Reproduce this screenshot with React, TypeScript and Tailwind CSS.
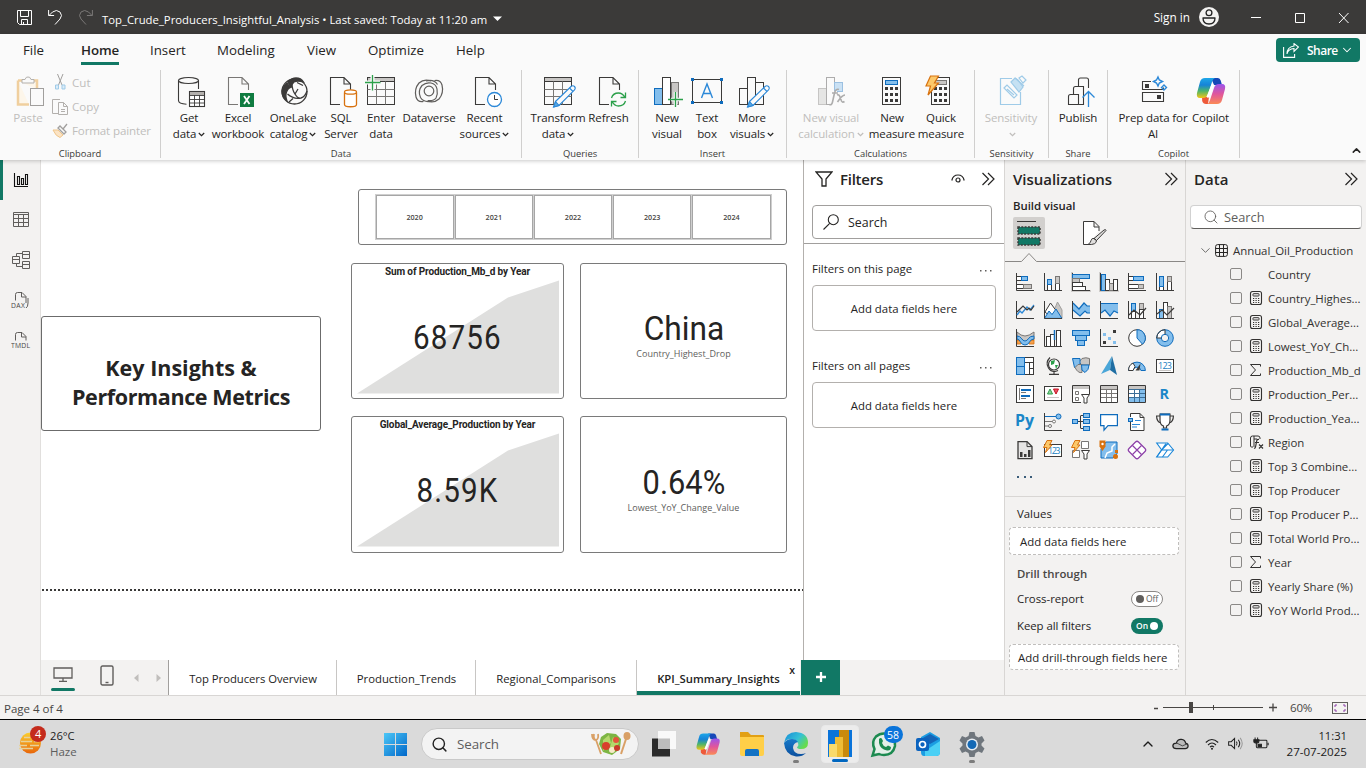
import React from "react";
import { ChevronDown, ChevronUp, Search as SearchIcon } from "lucide-react";

type Kids = { children?: React.ReactNode };

const DK = "#3b3a39";
const BL = "#0f6cbd";
const LB = "#83beec";
const GR = "#c8c6c4";
const MG = "#797775";
const OR = "#d8720f";

/* ---------- ribbon icons, 32 x 32 ---------- */

function R({ children, dim }: Kids & { dim?: boolean }) {
  return (
    <svg viewBox="0 0 32 32" width="32" height="32" fill="none" className={dim ? "overflow-visible opacity-40" : "overflow-visible"}>
      {children}
    </svg>
  );
}

const Page = ({ x = 6, c = DK }: { x?: number; c?: string }) => (
  <g transform={`translate(${x} 0)`} stroke={c} strokeWidth="1.1">
    <path d="M10 29.5H.5v-27H14l6.500 6.500v6M14 2.500v6.500h6.500" />
  </g>
);

const Pen = () => (
  <g strokeWidth="1.1" stroke="#2b88d8">
    <path d="M13.500 26.500 29 11.500q2-1.500 3.500 0t0 3.500L17 30.500l-5 1.500z" fill="#fafafa" />
    <path d="m13.500 26.500 3.500 4-5.500 1.500z" fill="#5aa7e2" />
    <path d="m27.500 13 3.500 3.500" />
  </g>
);

const Calc = ({ c = "#0f6cbd", f = LB }: { c?: string; f?: string }) => (
  <g>
    <rect x="6.500" y="2.500" width="18" height="27" stroke={DK} fill="#fafafa" />
    <rect x="9.500" y="5.500" width="12" height="4" stroke={c} fill={f} />
    {[12, 18, 24].map((y) =>
      [9, 14, 19].map((x) => <rect key={`${x}-${y}`} x={x} y={y} width="3" height="3" fill={DK} />)
    )}
  </g>
);

const CopilotMark = () => (
  <g>
    <defs>
      <linearGradient id="cpA" x1="0" y1="0" x2="0" y2="1">
        <stop offset="0" stopColor="#1ea7e8" />
        <stop offset=".35" stopColor="#1683d8" />
        <stop offset=".65" stopColor="#4db56a" />
        <stop offset="1" stopColor="#f3c515" />
      </linearGradient>
      <linearGradient id="cpB" x1="0" y1="0" x2="0" y2="1">
        <stop offset="0" stopColor="#9a55ec" />
        <stop offset=".5" stopColor="#e0569c" />
        <stop offset="1" stopColor="#fb8a55" />
      </linearGradient>
    </defs>
    <path d="M16 3h7q2 0 2.700 2.500L27 10h-8z" fill="#1648b8" />
    <path d="M7 22h7l-1 7H11q-3 0-3.800-3z" fill="#ee5a3a" />
    <path d="M10 3h10q-2 .5-3 4l-4 12q-1 4-5 4H5q-4 0-3-5L5 7q1-4 5-4z" fill="url(#cpA)" />
    <path d="M22 29H12q2-.5 3-4l4-12q1-4 5-4h3q4 0 3 5l-3 11q-1 4-5 4z" fill="url(#cpB)" />
    <path d="m17.500 10.500-4.500 11" stroke="#fff" strokeWidth="2.500" strokeLinecap="round" />
  </g>
);

const Bolt = () => <path d="M5.500 1h8l-4 7h4L3 20l2.500-9H1z" fill="#fcc86a" stroke={OR} strokeWidth="1.2" />;

const icoGet = (
  <R>
    <g stroke={DK} strokeWidth="1.1">
      <ellipse cx="15.500" cy="5.500" rx="10" ry="3" />
      <path d="M5.500 5.500v20c0 2 3.500 3.500 8 3.700M25.500 5.500V14" />
      <rect x="16.500" y="16.500" width="15" height="15" fill="#fff" />
      <path d="M16.500 20.500h15M16.500 24.500h15M16.500 28h15M21.500 20v11.500M26.500 20v11.500" strokeWidth=".9" />
      <path d="M17 18.500h14" stroke="#b3b0ad" strokeWidth="3" />
    </g>
  </R>
);
const icoExcel = (
  <R>
    <Page c={MG} />
    <rect x="18" y="18" width="14" height="14" fill="#107c41" />
    <path d="m22 21 5.500 8M27.500 21 22 29" stroke="#fff" strokeWidth="1.800" />
  </R>
);
const icoLake = (
  <R>
    <g stroke={DK} strokeWidth="1.300">
      <circle cx="17.500" cy="16.500" r="12.500" />
      <path d="M11 7q4-4 8-4 5 0 7.500 4-6-2-9.500 0-3 2.500-3 6z" fill={DK} />
      <path d="M10 8q-4 3-5 8 0 6 5 10-2-5-.5-9 1-3 3.500-4.500z" fill={DK} />
      <path d="M15 8q0 7 3 11 3 5 6 4 4-1 6-7M10.500 19q6 5.500 13.500 4M12 27l4-3.500M20 7.500l6 3M18 19l3-5" />
    </g>
  </R>
);
const icoSql = (
  <R>
    <Page x={5} />
    <g stroke={OR} strokeWidth="1.300" fill="#fff">
      <path d="M19.500 17.500v12c0 3 12 3 12 0v-12" />
      <ellipse cx="25.500" cy="17" rx="6" ry="2.200" />
    </g>
  </R>
);
const tableGrid = (
  <g stroke={DK}>
    <path d="M3 4.500h27" stroke={GR} strokeWidth="4" />
    <rect x="2.500" y="2.500" width="27" height="27" />
    <path d="M2.500 6.500h27" />
    <path d="M2.500 14.500h27M2.500 21.500h27M11.500 6.500v23M20.500 6.500v23" stroke={MG} />
  </g>
);
const icoEnter = (
  <R>
    {tableGrid}
    <path d="M7.500 0v15M0 7.500h15" stroke="#fafafa" strokeWidth="4" />
    <path d="M7.500 0v15.500M0 7.500h15.500" stroke="#2ba04a" strokeWidth="1.300" />
  </R>
);
const icoVerse = (
  <R>
    <g stroke="#605e5c" strokeWidth="1.200">
      <circle cx="16" cy="16" r="4.800" />
      <path d="M19 26q-8 2-11.500-3.500Q4.500 16 9 10.500 13 7 18 8t6 6-1 9q-2 3-8 2.500" />
      <path d="M13 6q8-2 11.500 3.500" />
      <path d="M18 6Q11 3.500 6 8q-5 6-3 14 1.500 5.500 7.500 4.500M14 26q7 2.500 12-2 5-6 3-14-1.500-5.500-7.500-4.500" />
    </g>
  </R>
);
const icoRecent = (
  <R>
    <Page />
    <circle cx="25.500" cy="24.500" r="7" stroke="#2b88d8" strokeWidth="1.300" fill="#fff" />
    <path d="M25.500 20v4.500H29" stroke={DK} />
  </R>
);
const icoTransform = (
  <R>
    {tableGrid}
    <Pen />
  </R>
);
const icoRefresh = (
  <R>
    <Page />
    <circle cx="25.500" cy="24.500" r="8" fill="#fafafa" />
    <path d="M18.500 23q1.500-5 7-5 4 0 6.500 4.500m.5-5v5h-5M32.500 26q-1.500 5-7 5-4 0-6.500-4.500m-.5 5v-5h5" stroke="#2ba04a" strokeWidth="1.300" />
  </R>
);
const icoNewVisual = (
  <R>
    <rect x="3.500" y="13.500" width="8" height="16" fill={LB} stroke={BL} />
    <rect x="20.500" y="7.500" width="7" height="22" fill={GR} stroke={MG} />
    <rect x="11.500" y="2.500" width="8" height="27" fill="#fff" stroke={DK} />
    <path d="M24.500 17v15M20 24.500h12" stroke="#fafafa" strokeWidth="3.500" />
    <path d="M24.500 17v15M17 24.500h15" stroke="#2ba04a" strokeWidth="1.300" />
  </R>
);
const icoTextBox = (
  <R>
    <rect x="1.500" y="4.500" width="29" height="23" stroke={DK} />
    {[[0, 3], [29, 3], [0, 26], [29, 26]].map(([x, y]) => (
      <rect key={`${x}${y}`} x={x} y={y} width="3" height="3" fill={BL} />
    ))}
    <path d="m10.500 23 5.500-14 5.500 14M12.500 18.500h7" stroke="#2b88d8" strokeWidth="1.400" />
  </R>
);
const icoMore = (
  <R>
    <g stroke={DK}>
      <rect x="3.500" y="13.500" width="8" height="16" />
      <rect x="11.500" y="2.500" width="8" height="27" />
      <rect x="19.500" y="7.500" width="8" height="22" />
    </g>
    <Pen />
  </R>
);
const icoNvc = (
  <R dim>
    <rect x="3.500" y="13.500" width="8" height="16" fill={GR} stroke={MG} />
    <rect x="11.500" y="2.500" width="8" height="27" stroke={DK} />
    <rect x="19.500" y="7.500" width="8" height="9" fill={LB} stroke={BL} />
    <path d="M15 16h7v14h-7z" fill="#fafafa" />
    <path d="M24 14.500q-3.500-1-4.500 3.500l-2 9q-.8 3.500-3 2.500M17 18h6M22 20q2-1 3 2l1.500 4q1 2 3 .5M30 20q-3 0-7.500 7" stroke={DK} strokeWidth="1.600" />
  </R>
);
const icoSens = (
  <R>
    <g stroke="#9fcbe8" strokeWidth="1.200">
      <path d="M17 3.500H5.500v26h20V17" />
      <path d="m9 13 3-3 10 10-3 3zM12 14l7 6" />
      <path d="m16 7 4-4 3 2 5 7-4 5z" fill="#c5e1f3" />
      <path d="m24 3 3-2 4 4-3 3zM20 3l9 8" />
    </g>
  </R>
);
const icoPublish = (
  <R>
    <path d="M6.500 29.500v-8q0-2 2-2h8v10zM11.500 19.500v-6q0-2 2-2h8v18h-5M16.500 11v-6q0-2 2-2h6q2 0 2 2v8" stroke={DK} strokeWidth="1.100" />
    <path d="M26.500 32V16.500m-6 6 6-6 6 6" stroke="#2b88d8" strokeWidth="1.300" />
  </R>
);
const icoPrep = (
  <R>
    <path d="M14 6.500H5.500v8h21v-2M5.500 17.500h21v9h-21z" stroke={DK} strokeWidth="1.100" />
    <path d="M8 9h4v4H8zM20 20h4v4h-4z" fill={DK} />
    <path d="m21 2 1.300 3L25.500 6.500 22.300 8 21 11l-1.500-3-3-1.500 3-1.500zM27 10l2.500 2.500L27 15l-2.500-2.500z" stroke="#2b88d8" strokeWidth="1.400" />
  </R>
);

const Chev = () => (
  <svg width="7" height="5" viewBox="0 0 7 5" className="ml-0.5 inline-block align-middle" fill="none">
    <path d="m.8 1 2.700 2.700L6.200 1" stroke="currentColor" strokeWidth="1.200" />
  </svg>
);

function RBtn({ w, icon, a, b, chev, off }: { w: string; icon: React.ReactNode; a: string; b?: string; chev?: boolean; off?: boolean }) {
  return (
    <button className={`${w} flex shrink-0 flex-col items-center whitespace-nowrap text-[11.500px] leading-4 tracking-[-0.12px] ${off ? "text-[#c0bebc]" : "text-[#252423]"}`}>
      <span className="h-[35px]">{icon}</span>
      <span>{a}</span>
      {(b || chev) && (
        <span>
          {b}
          {chev && <Chev />}
        </span>
      )}
    </button>
  );
}

function Group({ w, pl, name, children }: Kids & { w: string; pl: string; name: string }) {
  return (
    <section className={`${w} flex h-[88px] shrink-0 flex-col border-r border-[#d0cfce]`}>
      <div className={`${pl} flex h-[78px] shrink-0 items-start pt-[5px]`}>{children}</div>
      <div className="text-center text-[9.400px] leading-[11px] text-[#3b3a39]">{name}</div>
    </section>
  );
}

function TitleBar() {
  return (
    <header className="flex h-[34px] items-center bg-[#3b3a39] text-[11.300px] text-white">
      <svg width="17" height="17" viewBox="0 0 17 17" className="ml-4" fill="none" stroke="#fff">
        <path d="M1.500 1.500h14v14h-12l-2-2zM4.500 1.500v6h8v-6M5.500 15.500v-5h6v5M7.500 15v-2" />
      </svg>
      <svg width="15" height="16" viewBox="0 0 15 16" className="ml-[15px]" fill="none" stroke="#fff">
        <path d="M.6 1v5.500h5.500M1 6.500 4.500 3q4-3 7.500 0 3 3.500 0 7l-5 5.500" />
      </svg>
      <svg width="15" height="16" viewBox="0 0 15 16" className="ml-[15px]" fill="none" stroke="#7a7877">
        <path d="M14.400 1v5.500H8.900M14 6.500 10.500 3Q6.500 0 3 3 0 6.500 3 10l5 5.500" />
      </svg>
      <span className="ml-[9px] mt-1.5 w-[387px] whitespace-nowrap tracking-[0.01px]">
        Top_Crude_Producers_Insightful_Analysis • Last saved: Today at 11:20 am
      </span>
      <svg width="9" height="6" viewBox="0 0 9 6" className="ml-[4px] mt-1" fill="#fff"><path d="M0 .5h9L4.500 5z" /></svg>
      <span className="ml-auto mt-px text-[11.800px]">Sign in</span>
      <svg width="20" height="20" viewBox="0 0 20 20" className="ml-[9px]" fill="none" stroke="#222" strokeWidth="1.300">
        <circle cx="10" cy="10" r="10" fill="#f3f2f1" stroke="none" />
        <circle cx="10" cy="5.800" r="2.900" />
        <path d="M4 11h12q0 6-6 6t-6-6z" strokeLinejoin="round" />
      </svg>
      <svg width="98" height="14" viewBox="0 0 98 14" className="ml-8 mr-[17px] mt-px" fill="none" stroke="#fff">
        <path d="M0 6.500h10M44.500 2.500h9v9h-9zM88 2l9.500 10M97.500 2 88 12" />
      </svg>
    </header>
  );
}

function Ribbon() {
  return (
    <div className="relative z-10 h-[126px] bg-[#fafafa] shadow-[0_1px_4px_rgba(0,0,0,0.22)]">
      <nav className="flex h-[36px] items-start text-[13.300px] text-[#252423]">
        <span className="w-[81px] pl-[23px] pt-[7px]">File</span>
        <span className="mr-[31px] flex w-[38px] flex-col pt-[7px] font-semibold tracking-[-0.1px]">
          Home
          <i className="mt-px h-[3px] bg-[#117865]" />
        </span>
        <span className="w-[67px] pt-[7px]">Insert</span>
        <span className="w-[90px] pt-[7px]">Modeling</span>
        <span className="w-[61px] pt-[7px]">View</span>
        <span className="w-[88px] pt-[7px]">Optimize</span>
        <span className="pt-[7px]">Help</span>
        <button className="ml-auto mr-1.5 mt-1 flex h-6 w-[84px] items-center rounded bg-[#117865] pl-[7px] text-white">
          <svg width="16" height="15" viewBox="0 0 16 15" fill="none" stroke="#fff" strokeWidth="1.100">
            <path d="M.6 4v10.400h11V11M4 11q1-5 7-5.500v3l4.500-4.500L11 .6V3Q4 4 4 11z" />
          </svg>
          <span className="ml-2 mt-px text-[12px] font-semibold tracking-[-0.5px]">Share</span>
          <ChevronDown size={14} className="ml-[2px]" strokeWidth={1.800} />
        </button>
      </nav>
      <div className="flex">
        <Group w="w-[161px]" pl="pl-[7px]" name="Clipboard">
          <div className="flex w-[42px] flex-col items-center text-[11.600px] leading-4 text-[#c0bebc]">
            <span className="h-[35px]">
              <svg width="32" height="32" viewBox="0 0 32 32" fill="none" className="overflow-visible">
                <path d="M6 5.500h19v9M6 5.500v24h11" stroke="#f0cf9e" strokeWidth="2.500" fill="#fdf6ea" />
                <path d="M10 8V4.500h3q1-3 3-2.500 2-.5 3 2.500h3V8z" fill="#fafafa" stroke="#b3b0ad" />
                <rect x="18.500" y="13.500" width="13" height="17" fill="#fafafa" stroke="#a19f9d" />
              </svg>
            </span>
            Paste
          </div>
          <ul className="-mt-[4px] ml-[3px] text-[11.600px] leading-[24px] text-[#c0bebc]">
            <li className="flex h-6 items-center gap-1">
              <svg width="16" height="18" viewBox="0 0 16 18" fill="none">
                <path d="m5.500 0 4.500 11M11 0 6.500 11" stroke="#a19f9d" />
                <path d="M3.500 11h3v4h-3zM10 11h3v4h-3z" fill="#dcecf8" stroke="#9fcbe8" />
              </svg>
              Cut
            </li>
            <li className="flex h-6 items-center gap-1">
              <svg width="16" height="18" viewBox="0 0 16 18" fill="none" stroke="#b3b0ad">
                <path d="M6 15.500H.5v-14H8M6.500 4.500h5l4 4v8h-9zM11.500 4.500v4h4M9 11.500h4M9 13.500h4" />
              </svg>
              Copy
            </li>
            <li className="flex h-6 items-center gap-1 tracking-[-0.15px]">
              <svg width="16" height="18" viewBox="0 0 16 18" fill="none">
                <path d="M1 8h5l5 5-3 2.500q-4-1-7-7.500z" fill="#fbe3c4" stroke="#efc58a" />
                <path d="m6 6 6 6 2-2-6-6zM11 7l4-5" stroke="#a19f9d" strokeWidth="1.300" />
              </svg>
              Format painter
            </li>
          </ul>
        </Group>
        <Group w="w-[361px]" pl="pl-[6px]" name="Data">
          <RBtn w="w-[44px]" icon={icoGet} a="Get" b="data" chev />
          <RBtn w="w-[54px]" icon={icoExcel} a="Excel" b="workbook" />
          <RBtn w="w-[56px]" icon={icoLake} a="OneLake" b="catalog" chev />
          <RBtn w="w-[40px]" icon={icoSql} a="SQL" b="Server" />
          <RBtn w="w-[40px]" icon={icoEnter} a="Enter" b="data" />
          <RBtn w="w-[56px]" icon={icoVerse} a="Dataverse" />
          <RBtn w="w-[55px]" icon={icoRecent} a="Recent" b="sources" chev />
        </Group>
        <Group w="w-[117px]" pl="pl-[10px]" name="Queries">
          <RBtn w="w-[52px]" icon={icoTransform} a="Transform" b="data" chev />
          <RBtn w="w-[49px]" icon={icoRefresh} a="Refresh" />
        </Group>
        <Group w="w-[148px]" pl="pl-[8px]" name="Insert">
          <RBtn w="w-[40px]" icon={icoNewVisual} a="New" b="visual" />
          <RBtn w="w-[40px]" icon={icoTextBox} a="Text" b="box" />
          <RBtn w="w-[50px]" icon={icoMore} a="More" b="visuals" chev />
        </Group>
        <Group w="w-[188px]" pl="pl-[7px]" name="Calculations">
          <RBtn w="w-[74px]" icon={icoNvc} a="New visual" b="calculation" chev off />
          <RBtn w="w-[48px]" icon={<R><Calc /></R>} a="New" b="measure" />
          <RBtn w="w-[50px]" icon={<R><Calc c={MG} f={GR} /><Bolt /></R>} a="Quick" b="measure" />
        </Group>
        <Group w="w-[74px]" pl="pl-[6px]" name="Sensitivity">
          <RBtn w="w-[60px]" icon={icoSens} a="Sensitivity" chev off />
        </Group>
        <Group w="w-[59px]" pl="pl-[7px]" name="Share">
          <RBtn w="w-[44px]" icon={icoPublish} a="Publish" />
        </Group>
        <Group w="w-[132px]" pl="pl-[9px]" name="Copilot">
          <RBtn w="w-[72px]" icon={icoPrep} a="Prep data for" b="AI" />
          <RBtn w="w-[43px]" icon={<R><CopilotMark /></R>} a="Copilot" />
        </Group>
        <ChevronUp size={13} className="ml-auto mr-[3px] mt-[74px]" strokeWidth={2.800} color="#252423" />
      </div>
    </div>
  );
}

function Rail() {
  return (
    <aside className="flex w-[41px] shrink-0 flex-col border-r border-[#e1dfdd] bg-[#f3f2f1]">
      <div className="flex h-10 items-center border-l-[3px] border-[#117865] pl-[10px]">
        <svg width="16" height="16" viewBox="0 0 16 16" fill="none" stroke="#111" strokeWidth="1.100">
          <path d="M1.500 1v13.500H15M4.500 12.500v-8h2v8zM8.500 12.500v-6h2v6zM12.500 12.500v-10h2v10z" />
        </svg>
      </div>
      <div className="flex h-10 items-center pl-[13px]">
        <svg width="16" height="16" viewBox="0 0 16 16" fill="none" stroke="#605e5c">
          <path d="M.5.5h15v14H.5zM.5 2.500h15M.5 6.500h15M.5 10.500h15M5.500 2.500v12M10.500 2.500v12" />
        </svg>
      </div>
      <div className="flex h-10 items-center pl-[12px]">
        <svg width="18" height="18" viewBox="0 0 18 18" fill="none" stroke="#605e5c">
          <path d="M.5 5.500h7v7h-7zM.5 8.500h7M10.500.5h7v7h-7zM10.500 3.500h7M10.500 10.500h7v7h-7zM10.500 13.500h7M4.500 5.500v-3h6M4.500 12.500v3h6" />
        </svg>
      </div>
      <div className="flex h-10 items-center pl-[11px]">
        <svg width="19" height="18" viewBox="0 0 19 18" fill="none" stroke="#605e5c">
          <path d="M4.500 9.500V3.500q0-2 2-2H11l4 4V12M10.500 1.500v4.500H15M17 7v5q0 4-2 5" />
          <text x="0" y="17" fontSize="6.800" fontFamily="Open Sans, sans-serif" fill="#484644" stroke="none" textLength="14">DAX</text>
        </svg>
      </div>
      <div className="flex h-10 items-center pl-[11px]">
        <svg width="20" height="18" viewBox="0 0 20 18" fill="none" stroke="#605e5c">
          <path d="M4.500 9.500V3.500q0-2 2-2H11l4 4V9.500M10.500 1.500v4.500H15" />
          <text x="0" y="17" fontSize="6.800" fontFamily="Open Sans, sans-serif" fill="#484644" stroke="none" textLength="19">TMDL</text>
        </svg>
      </div>
    </aside>
  );
}

function Kpi({ title, value }: { title: string; value: string }) {
  return (
    <div className="relative h-full w-full rounded-[3px] border border-[#7a7a7a] bg-white text-center font-['Roboto',sans-serif] text-[#252423]">
      <svg className="absolute left-[5px] top-[15px]" width="203" height="115" viewBox="0 0 203 115">
        <path d="M0 114.500 151 18.500 202 1.500v113z" fill="#dfdfde" />
      </svg>
      <div className="relative pt-[1px] text-[10px] font-bold leading-[13px] tracking-[-0.12px]">{title}</div>
      <div className="relative mt-[38px] scale-x-[.87] text-[34px] leading-[42px] tracking-[1.300px]">{value}</div>
    </div>
  );
}

function CardVisual({ value, label, cls }: { value: string; label: string; cls: string }) {
  return (
    <div className="flex h-full w-full flex-col items-center rounded-[3px] border border-[#7a7a7a] bg-white text-[#252423]">
      <div className={`font-['Roboto',sans-serif] leading-[36px] ${cls}`}>{value}</div>
      <div className="text-[9px] leading-[13px] text-[#605e5c]">{label}</div>
    </div>
  );
}

function Canvas() {
  return (
    <div className="relative h-[500px] w-[762px] shrink-0 bg-white">
      <div className="absolute left-0 top-[156px] flex h-[115px] w-[280px] flex-col items-center rounded-[3px] border border-[#6b6b6b] pt-[36px] text-[21.500px] font-bold leading-[29px] text-[#252423]">
        <span>Key Insights &amp;</span>
        <span className="whitespace-nowrap tracking-[-0.38px]">Performance Metrics</span>
      </div>
      <div className="absolute left-[317px] top-[29px] flex h-[56px] w-[429px] rounded-[3px] border border-[#7a7a7a] pb-[5px] pl-[16px] pr-[15px] pt-[5px]">
        {["2020", "2021", "2022", "2023", "2024"].map((y) => (
          <div key={y} className="mx-[0.5px] flex flex-1 items-center justify-center border border-[#a6a6a6] text-[7.200px] font-semibold text-[#484644] outline-[0.5px] outline-[#cfcfcf]">
            {y}
          </div>
        ))}
      </div>
      <div className="absolute left-[310px] top-[103px] h-[136px] w-[213px]"><Kpi title="Sum of Production_Mb_d by Year" value="68756" /></div>
      <div className="absolute left-[539px] top-[103px] h-[136px] w-[207px]"><CardVisual value="China" label="Country_Highest_Drop" cls="mt-[47px] scale-x-[.96] text-[33px]" /></div>
      <div className="absolute left-[310px] top-[256px] h-[137px] w-[213px]"><Kpi title="Global_Average_Production by Year" value="8.59K" /></div>
      <div className="absolute left-[539px] top-[256px] h-[137px] w-[207px]"><CardVisual value="0.64%" label="Lowest_YoY_Change_Value" cls="mt-[48px] scale-x-[.92] text-[33.500px]" /></div>
      <svg className="absolute left-px top-[429px]" width="761" height="2" viewBox="0 0 761 2">
        <path d="M0 1h761" stroke="#3b3a39" strokeWidth="2" strokeDasharray="2 2" />
      </svg>
    </div>
  );
}

const Collapse = () => (
  <svg width="13" height="14" viewBox="0 0 13 14" fill="none" stroke="#252423" strokeWidth="1.200">
    <path d="m.5 1 6 6-6 6M6 1l6 6-6 6" />
  </svg>
);

function Filters() {
  return (
    <aside className="flex h-[500px] w-[201px] shrink-0 flex-col border-l border-[#b3b0ad] bg-white text-[11.400px] text-[#252423]">
      <div className="flex h-[84px] shrink-0 flex-col border-b border-[#a19f9d] pl-2">
        <div className="flex h-[38px] items-center pr-[9px]">
          <svg width="18" height="16" viewBox="0 0 18 16" className="ml-[3px]" fill="none" stroke="#252423" strokeWidth="1.300">
            <path d="M1 1h16l-6 7v7H7V8z" />
          </svg>
          <h2 className="ml-[7px] text-[15px] font-semibold tracking-[-0.25px]">Filters</h2>
          <svg width="14" height="10" viewBox="0 0 14 10" className="ml-auto mr-[17px]" fill="none" stroke="#252423" strokeWidth="1.200">
            <path d="M.8 6.500Q2 1 7 1t6.200 5.500" /><circle cx="7" cy="6" r="2" />
          </svg>
          <Collapse />
        </div>
        <div className="mt-[7px] flex h-[34px] w-[180px] items-center rounded-sm border border-[#a19f9d] pl-[10px] text-[12.400px]">
          <svg width="16" height="16" viewBox="0 0 16 16" fill="none" stroke="#252423" strokeWidth="1.100">
            <circle cx="10.300" cy="5.700" r="5" /><path d="M6.700 9.300.5 15.500" />
          </svg>
          <span className="ml-[9px] mt-0.5">Search</span>
        </div>
      </div>
      {["Filters on this page", "Filters on all pages"].map((t) => (
        <div key={t} className="h-[97px] shrink-0 pl-2 pt-[14px]">
          <div className="flex h-[21px] items-center justify-between pr-[12px]">
            {t}
            <svg width="12" height="2" viewBox="0 0 12 2" className="mt-1" fill="#605e5c"><path d="M0 0h1.500v1.500H0zM5 0h1.500v1.500H5zM10 0h1.500v1.500H10z" /></svg>
          </div>
          <div className="mt-[6px] flex h-[46px] w-[184px] items-center justify-center rounded-sm border border-[#b3b0ad] pt-px">Add data fields here</div>
        </div>
      ))}
    </aside>
  );
}

/* ---------- visual gallery icons, 18 x 18 ---------- */

const axis = <path d="M.5 0v17.500H18" stroke={DK} />;
const boxf = (x: number, y: number, w: number, h: number, f = "#fff", s = DK) => (
  <rect x={x + 0.5} y={y + 0.5} width={w - 1} height={h - 1} fill={f} stroke={s} />
);
const bolt18 = <path d="M3-.5h5L5.500 4H8L1.500 11.500 3 6.500H-.5z" fill="#fcc86a" stroke={OR} />;
const funnel = <path d="M9.500 9.500h8L15 13v5h-3v-5z" fill="#fff" stroke={DK} />;

const gallery: React.ReactNode[] = [
  <>{axis}{boxf(0, 3, 6, 5)}{boxf(5, 3, 7, 5, LB, BL)}{boxf(0, 11, 8, 5)}{boxf(7, 11, 9, 5, GR, MG)}</>,
  <>{axis}{boxf(3, 11, 5, 7)}{boxf(3, 6, 5, 6, LB, BL)}{boxf(11, 10, 5, 8)}{boxf(11, 3, 5, 8, GR, MG)}</>,
  <><path d="M-1-1h2v18h18v2H-1z" fill="#cfcdcb" />{axis}{boxf(0, 1, 18, 5, LB, BL)}{boxf(0, 5, 8, 5, GR, MG)}{boxf(0, 9, 11, 5)}{boxf(0, 13, 14, 5)}</>,
  <><path d="M-1-1h2v18h18v2H-1z" fill="#cfcdcb" />{axis}{boxf(1, 1, 5, 17, LB, BL)}{boxf(5, 6, 5, 12)}{boxf(9, 10, 5, 8, GR, MG)}{boxf(13, 6, 5, 12)}</>,
  <>{axis}{boxf(0, 3, 6, 5)}{boxf(5, 3, 11, 5, LB, BL)}{boxf(0, 11, 11, 5)}{boxf(10, 11, 6, 5, GR, MG)}</>,
  <>{axis}{boxf(3, 13, 5, 5)}{boxf(3, 3, 5, 11, LB, BL)}{boxf(11, 8, 5, 10)}{boxf(11, 3, 5, 6, GR, MG)}</>,
  <>{axis}<path d="m1 14 3-4 2 2 5-6 3 3 4-5" stroke="#2b88d8" strokeWidth="1.300" /><path d="m1 11 6-6 4 4 2-2 2 2 3-4" stroke={DK} strokeWidth="1.200" /></>,
  <><path d="m9 12 4.500-11L18 9v8h-6z" fill={GR} stroke="#a19f9d" /><path d="m1 11 5.500-9L12 9.500 7 16z" fill="#fff" stroke={DK} /><path d="M.5 17.400h17.400L12 8 8 13.500 5 10z" fill={LB} stroke={BL} />{axis}</>,
  <><path d="m1 2 6 6 5-6 3 3h3v7h-3l-2-2-5 5-7-6z" fill={LB} /><path d="m1 2 6 6 5-6 3 3h3M1 9l7 6 5-5 2 2h3" stroke={BL} strokeWidth="1.200" />{axis}</>,
  <><path d="M1 2.500h17V12l-4-2-4 5-5-6-4 3z" fill={LB} /><path d="M1 2.500h17M1 12l4-3 5 6 4-5 4 2" stroke={BL} strokeWidth="1.200" />{axis}</>,
  <>{boxf(3, 2, 5, 9, LB, BL)}{boxf(3, 10, 5, 8)}{boxf(11, 2, 5, 7, GR, MG)}{boxf(11, 8, 5, 10)}{axis}<path d="m1 14 5-5 6 5 6-7" stroke={DK} strokeWidth="1.200" /></>,
  <>{boxf(3, 8, 5, 10, LB, BL)}{boxf(7, 1, 5, 17)}{boxf(11, 5, 5, 13, GR, MG)}{axis}<path d="m1 13 5-4 5 5 7-7" stroke={DK} strokeWidth="1.200" /></>,
  <><path d="M1 8h5v3H1zM14 8h4v3h-4zM1 11h4v4H1zM13 11h5v4h-5z" fill="#f5a04c" stroke={OR} strokeWidth=".8" /><path d="M1 3q4 4 8 4t9-4v4.500q-5 1-9 5.500-4-5-8-5.500z" fill="#c8c6c4" stroke={MG} /><path d="M1 7q3 0 4.500 2.500T9 12t3.500-2.500T18 7v3q-3 0-4.500 3T9 16t-4.500-3T1 10z" fill={LB} stroke={BL} />{axis}</>,
  <>{axis}{boxf(2, 7, 5, 11)}{boxf(6, 5, 5, 13)}<path d="M10.500 1v10" stroke={BL} strokeWidth="1.500" />{boxf(12, 1, 5, 17)}</>,
  <>{boxf(0, 1, 18, 6, LB, BL)}{boxf(3, 6, 12, 6, LB, BL)}{boxf(5, 11, 8, 6, LB, BL)}</>,
  <>{axis}<path d="M3 4h3v3H3zM8 8h3v3H8zM13 12h3v3h-3z" fill={LB} /><path d="M13 1h3v3h-3zM3 12h3v3H3z" fill={DK} /></>,
  <><circle cx="9" cy="9" r="8.300" fill="#fff" stroke={DK} /><path d="M9 9V.7a8.300 8.300 0 0 1 5.500 14.500z" fill={LB} stroke={BL} /></>,
  <><circle cx="9" cy="9" r="6" stroke={LB} strokeWidth="4.500" /><path d="M3 9a6 6 0 0 1 6-6" stroke="#fff" strokeWidth="4.500" /><circle cx="9" cy="9" r="8.300" stroke={BL} /><circle cx="9" cy="9" r="3.700" stroke={BL} /><path d="M.7 9A8.300 8.300 0 0 1 9 .7v4.600M.7 9h4.600" stroke={DK} /></>,
  <>{boxf(0, 0, 18, 18)}{boxf(0, 0, 9, 10, LB, BL)}{boxf(0, 9, 9, 9, LB, BL)}<path d="M9 5.500h9M13.500 11.500H18M13.500 5.500v12" stroke={DK} /></>,
  <><circle cx="10" cy="7.500" r="5.500" fill="#fff" stroke={DK} strokeWidth="1.200" /><path d="m7 4 4-1-1 4-3 1zM11 8h3l-2 4z" fill="#2ba04a" /><path d="M6 .5q-5 5-1.500 10.500T14 13.500M10 14v3M5 17.400h10" stroke={DK} strokeWidth="1.200" /></>,
  <><path d="M10 1.500q4-1.500 7.500 0v6.500H9V7L7 5z" fill={GR} stroke={MG} /><path d="M.5 1.500H8V7l-3 3.500H2.500z" fill={LB} stroke={BL} /><path d="m3 10.500 3-3h4v8q-4 1-7-5z" fill={GR} stroke={MG} /><path d="M9.500 8h7.500q0 5-4 7.500l-3-2.500z" fill={LB} stroke={BL} /></>,
  <><path d="M12-1 1 17l9-4z" fill="#4aa6d8" /><path d="m12-1 5 19-7-5z" fill="#1f6ea3" /></>,
  <><path d="M.6 13.500A8.400 8.400 0 0 1 17.400 13.500h-4.500A4 4 0 0 0 5 13.500z" fill={LB} stroke={BL} /><path d="M.6 13.500A8 8 0 0 1 5 6l2 3.500-2 4z" fill="#fff" stroke={DK} /><path d="m7.500 13.500 5-7-1 7z" fill={DK} /></>,
  <>{boxf(0, 2, 18, 14)}<text x="2" y="11.500" fontSize="9" fontFamily="Open Sans, sans-serif" fill="#1a7fc1" textLength="14">123</text><path d="M3 13.500h12" stroke={GR} /></>,
  <>{boxf(0, 0, 18, 18)}<path d="M3.500 3v12" stroke={MG} /><path d="M5 5h10M5 11h9" stroke={BL} strokeWidth="2" /><path d="M5 7.500h5M5 13.500h5" stroke={MG} /></>,
  <>{boxf(0, 1, 18, 15)}<path d="m6 4 2.500 5h-5z" fill="#8fd19e" stroke="#2ba04a" /><path d="M9.500 4h5L12 9z" fill="#e8596a" stroke="#c50f1f" /><path d="M3 12.500h12" stroke={GR} /></>,
  <><path d="M9 17.500H.5V.5h17V9" fill="#fff" stroke={DK} /><path d="M1 2.500h16" stroke={GR} strokeWidth="3" /><path d="M3.500 6.500h3v3h-3zM3.500 12.500h3v3h-3z" stroke={MG} />{funnel}</>,
  <><path d="M1 1h16v16H1z" fill="#fff" /><path d="M1 2.500h16" stroke={GR} strokeWidth="3" /><path d="M1 4.500h16M1 8.500h16M1 12.500h16M6.500 4v13M11.500 4v13" stroke={MG} /><path d="M.5.5h17v17H.5z" stroke={DK} /></>,
  <><path d="M1 1h16v16H1z" fill="#fff" /><path d="M1 2.500h16" stroke={GR} strokeWidth="3" /><path d="M12 5h5v12H1v-4h11z" fill={LB} /><path d="M1 4.500h16M1 8.500h16M1 12.500h16M6.500 4v13M11.500 4v13" stroke="#3b6e98" /><path d="M.5.5h17v17H.5z" stroke={DK} /></>,
  <text x="3.500" y="14" fontSize="14.500" fontWeight="700" fontFamily="Open Sans, sans-serif" fill="#1a86c8" textLength="9.500" lengthAdjust="spacingAndGlyphs">R</text>,
  <text x="-1" y="13" fontSize="16" fontWeight="700" fontFamily="Open Sans, sans-serif" fill="#1a86c8" textLength="19" lengthAdjust="spacingAndGlyphs">Py</text>,
  <>{axis}<path d="M1 3.500h13M1 8.500h9M1 13h5" stroke={MG} /><path d="M1 3.500h13" stroke={BL} /><circle cx="14.500" cy="3.500" r="2.500" fill={LB} stroke={BL} /><circle cx="10" cy="8.500" r="1.500" fill="#fff" stroke={MG} /><circle cx="6" cy="13" r="1.500" fill="#fff" stroke={MG} /></>,
  <><path d="M6 8.500h5M8.500 3v12M8.500 2.500H12M8.500 15.500H12" stroke={DK} />{boxf(0, 6, 6, 5, LB, BL)}{boxf(11, 0, 7, 5, LB, BL)}{boxf(11, 6, 7, 5, LB, BL)}{boxf(11, 13, 7, 5, LB, BL)}</>,
  <path d="M.6 1.600h16.800v11H8l-4 4.500v-4.500H.6z" fill="#fff" stroke={BL} strokeWidth="1.200" />,
  <><path d="M2.500 4V.5H12l4 4v13H2.500V9M12 .5v4h4" fill="#fff" stroke={DK} />{boxf(0, 5, 5, 4, LB, BL)}<path d="M7 7.500h6M4 11.500h8M4 14h5" stroke="#2b88d8" /></>,
  <><path d="M4 3H.6q0 6 4.500 7M14 3h3.400q0 6-4.500 7" stroke={DK} strokeWidth="1.200" /><path d="M4 1h10v6q0 5-3.500 6v2h-3v-2Q4 12 4 7z" fill="#fff" stroke={DK} strokeWidth="1.200" /><path d="M4 1.500h10M5.500 16.500h7" stroke={BL} strokeWidth="2" /></>,
  <><path d="M2 .6h9l5 5v12H2z" fill="#e6e5e4" stroke={DK} strokeWidth="1.300" /><path d="M11 .6v5h5" stroke={DK} /><path d="M4 11h2.500v5H4zM8 13h2.500v3H8zM12 9h2.500v7H12z" fill={DK} /></>,
  <>{boxf(0, 3, 18, 13)}<text x="4" y="13" fontSize="9" fontFamily="Open Sans, sans-serif" fill="#1a7fc1" textLength="12.500">123</text>{bolt18}</>,
  <><path d="M9.500.5h7v7h-7zM.5 9.500h7v7h-7z" fill="#fff" stroke={MG} />{bolt18}{funnel}</>,
  <><path d="M6 1h11v12l-4 4H1V8z" fill={LB} stroke={BL} /><path d="m15 3-3 3v4l-5 2-2 5" stroke="#fff" strokeWidth="1.500" /><path d="M-.5-.5h6v6L2.500 10-.5 5.500z" fill={OR} /><circle cx="15.500" cy="15.500" r="2.500" fill={OR} /><path d="M15 9h3v3h-3z" fill={OR} /><circle cx="2.500" cy="3" r="1.200" fill="#fff" /></>,
  <g stroke="#8c3fa8" strokeWidth="1.200" fill="#fff"><path d="M7.500 1q1.500-1.500 3 0L17 7.500q1.500 1.500 0 3L10.500 17q-1.500 1.500-3 0L1 10.500q-1.500-1.500 0-3z" /><path d="m4.500 4.500 9 9M13.500 4.500l-9 9" /></g>,
  <g stroke="#1a86d8" strokeWidth="1.100" fill="#fff"><path d="M.7 2h11l5.800 7-5.800 7H.7l5-7z" /><path d="M5.500 9h12M.7 16 10 2.500M6.500 16l5-7M5.500 9 12 2.500" fill="none" /></g>,
];

function Drop({ h, t, c }: { h: string; t: string; c: string }) {
  return <div className={`${h} ${c} flex w-[170px] items-center whitespace-nowrap rounded-sm border border-dashed border-[#c0bebc] bg-white pt-px`}>{t}</div>;
}

function Visualizations() {
  return (
    <aside className="flex h-[535px] w-[181px] shrink-0 flex-col border-l border-[#d8d6d4] bg-[#f3f2f1] text-[11.400px] leading-4 text-[#252423]">
      <div className="flex h-[38px] shrink-0 items-center justify-between pl-2 pr-[7px]">
        <h2 className="text-[15px] font-semibold tracking-[-0.02px]">Visualizations</h2>
        <Collapse />
      </div>
      <div className="h-[19px] shrink-0 pl-2 font-semibold tracking-[-0.05px]">Build visual</div>
      <div className="flex h-[32px] shrink-0 pl-2">
        <div className="flex h-8 w-8 items-center justify-center rounded-[2px] bg-[#d2d0ce]">
          <svg width="24" height="25" viewBox="0 0 24 25" fill="none">
            <path d="M0 .5h19" stroke={DK} />
            <rect x="1" y="6" width="22" height="7" fill="#117865" stroke={DK} strokeWidth="1.500" strokeDasharray="2 1.300" />
            <rect x="1" y="17" width="22" height="7" fill="#117865" stroke={DK} strokeWidth="1.500" strokeDasharray="2 1.300" />
          </svg>
        </div>
        <svg width="25" height="25" viewBox="0 0 25 25" className="ml-[37px] mt-1" fill="none" stroke={DK}>
          <path d="M6 23.500H1.500v-23H12l5 5V10M12 .5V6h5" fill="#fff" />
          <path d="M24 9.500 14.500 19.500l-2.500-2L22 9q2-1 2 .5zM14.500 19.500q0 4.500-8.500 4 3-2 3-4 1-3 3-2z" fill="#e0dfde" />
        </svg>
      </div>
      <svg width="180" height="14" viewBox="0 0 180 14" className="shrink-0" fill="none" stroke="#8a8886">
        <path d="M0 12.500h16.500l7.500-8 7.500 8H180" />
      </svg>
      <div className="grid shrink-0 grid-cols-[repeat(6,28px)] pl-[6px] pt-[5px]">
        {gallery.map((g, i) => (
          <div key={i} className="flex h-7 items-center justify-center">
            <svg width="18" height="18" viewBox="0 0 18 18" fill="none" className="overflow-visible">{g}</svg>
          </div>
        ))}
      </div>
      <div className="h-[33px] shrink-0 border-b border-[#d8d6d4] pl-[12px] pt-[6px]">
        <svg width="16" height="2" viewBox="0 0 16 2" className="mt-[6px]" fill="#3b5d7a"><path d="M0 0h2v2H0zM7 0h2v2H7zM13 0h2v2h-2z" /></svg>
      </div>
      <div className="h-[30px] shrink-0 pl-3 pt-[9px]">Values</div>
      <div className="pl-[4px]"><Drop h="h-[28px]" c="pl-[10px]" t="Add data fields here" /></div>
      <div className="mt-[11px] h-[24px] shrink-0 pl-3 font-semibold text-[#484644]">Drill through</div>
      <div className="mt-px flex h-[16px] items-center pl-3">
        <span className="w-[114px]">Cross-report</span>
        <span className="flex h-4 w-8 items-center gap-0.5 rounded-full border border-[#8a8886] bg-white pl-1 text-[8.500px] text-[#605e5c]"><i className="h-2 w-2 rounded-full bg-[#605e5c]" />Off</span>
      </div>
      <div className="mt-[11px] flex h-[16px] items-center pl-3">
        <span className="w-[114px] tracking-[-0.05px]">Keep all filters</span>
        <span className="flex h-4 w-8 items-center gap-0.5 rounded-full bg-[#117865] pl-[5px] text-[8.500px] font-semibold text-white">On<i className="h-2 w-2 rounded-full bg-white" /></span>
      </div>
      <div className="pl-[4px] pt-[10px]"><Drop h="h-[26px]" c="pl-[8px]" t="Add drill-through fields here" /></div>
    </aside>
  );
}

const fields: [string, string][] = [
  ["", "Country"], ["c", "Country_Highes..."], ["c", "Global_Average..."], ["c", "Lowest_YoY_Ch..."], ["s", "Production_Mb_d"],
  ["c", "Production_Per..."], ["c", "Production_Yea..."], ["f", "Region"], ["c", "Top 3 Combine..."], ["c", "Top Producer"],
  ["c", "Top Producer P..."], ["c", "Total World Pro..."], ["s", "Year"], ["c", "Yearly Share (%)"], ["c", "YoY World Prod..."],
];

function FieldIcon({ k }: { k: string }) {
  return (
    <svg width="14" height="14" viewBox="0 0 14 14" fill="none" stroke="#323130" className="ml-[7px] mr-[5px] shrink-0 overflow-visible">
      {k === "c" && (
        <>
          <rect x="1.500" y=".5" width="11" height="13" rx="2" strokeWidth="1.100" />
          <rect x="4" y="2.700" width="6" height="2.300" rx=".5" />
          <path d="M4 7.500h1.200M6.500 7.500h1.200M9 7.500h1.200M4 9.500h1.200M6.500 9.500h1.200M9 9.500h1.200M4 11.500h1.200M6.500 11.500h1.200M9 11.500h1.200" strokeWidth="1.200" />
        </>
      )}
      {k === "s" && <path d="M11.500 3.500V1.500h-10l5 5.500-5 5.500h10v-2" />}
      {k === "f" && (
        <>
          <path d="M4 12H2.500q-1 0-1-1V3q0-2 2-2H9q2 0 2 2v1M5 1v11M5 4h3" />
          <path d="M10 4.500q-2-.5-2.300 1.500L6.500 12q-.3 1.500-1.500 1.200M6 7.500h4M10 9.500l4 4M14 9.500l-4 4" strokeWidth="1.200" />
        </>
      )}
    </svg>
  );
}

function DataPane() {
  return (
    <aside className="flex h-[535px] w-[180px] shrink-0 flex-col border-l border-[#d8d6d4] bg-[#f3f2f1] text-[11.450px] text-[#323130]">
      <div className="flex h-[38px] items-center justify-between pl-2 pr-[7px]">
        <h2 className="text-[15px] font-semibold text-[#252423]">Data</h2>
        <Collapse />
      </div>
      <div className="ml-1 mt-[7px] flex h-[24px] w-[172px] items-center rounded border border-[#d1d1d1] border-b-[#605e5c] bg-white pl-[12px] text-[12.800px] text-[#605e5c]">
        <SearchIcon size={16} strokeWidth={1.300} />
        <span className="ml-[5px] mt-px">Search</span>
      </div>
      <div className="mt-[9px] flex h-6 items-center pl-[12px]">
        <ChevronDown size={15} strokeWidth={1.100} />
        <svg width="13" height="13" viewBox="0 0 13 13" className="ml-[2px] mr-[5px]" fill="none" stroke="#252423">
          <rect x=".6" y=".6" width="11.800" height="11.800" rx="2" />
          <path d="M.6 4.500h11.800M.6 8.500h11.800M4.500.6v11.800M8.500.6v11.800" />
        </svg>
        <span className="mt-px tracking-[-0.04px]">Annual_Oil_Production</span>
      </div>
      {fields.map(([k, t]) => (
        <div key={t} className="flex h-6 items-center whitespace-nowrap pl-[44px]">
          <i className="h-3 w-3 shrink-0 rounded-[2px] border border-[#8a8886]" />
          <FieldIcon k={k} />
          <span className="mt-px tracking-[-0.03px]">{t}</span>
        </div>
      ))}
    </aside>
  );
}

function PageTabs() {
  return (
    <div className="flex h-[35px] w-[963px] bg-[#f3f2f1] text-[11.300px] text-[#252423]">
      <div className="flex w-[128px] shrink-0 items-start border-r border-[#a19f9d]">
        <div className="ml-[10px] flex w-6 flex-col items-center pt-[7px]">
          <svg width="20" height="15" viewBox="0 0 20 15" fill="none" stroke="#605e5c" strokeWidth="1.300">
            <path d="M1 1h18v10H1zM10 11v3M6 14.300h8" />
          </svg>
          <i className="mt-[6px] h-[3px] w-6 rounded-full bg-[#117865]" />
        </div>
        <svg width="14" height="21" viewBox="0 0 14 21" className="ml-[25px] mt-[5px]" fill="none" stroke="#605e5c" strokeWidth="1.400">
          <rect x="1" y="1" width="12" height="19" rx="1.500" /><path d="M5.500 17.500h3" />
        </svg>
        <svg width="27" height="9" viewBox="0 0 27 9" className="ml-[20px] mt-[14px]" fill="#c0bebc"><path d="M4.500 0v8L0 4zM22.500 0v8L27 4z" /></svg>
      </div>
      <div className="flex w-[168px] items-center justify-center border-r border-[#c8c6c4] bg-white pl-px pt-[3px] tracking-[-0.04px]">Top Producers Overview</div>
      <div className="flex w-[139px] items-center justify-center border-r border-[#c8c6c4] bg-white pl-px pt-[3px]">Production_Trends</div>
      <div className="flex w-[161px] items-center justify-center border-r border-[#c8c6c4] bg-white pt-[3px]">Regional_Comparisons</div>
      <div className="relative flex w-[163px] items-center justify-center border-b-4 border-[#117865] bg-white pt-[7px] font-semibold tracking-[0.02px]">
        KPI_Summary_Insights
        <span className="absolute right-[5px] top-[2px] text-[10.500px] leading-4">x</span>
      </div>
      <div className="ml-px flex w-[39px] items-center justify-center bg-[#117865] pb-0.5">
        <svg width="10" height="10" viewBox="0 0 10 10" stroke="#fff" strokeWidth="2.300"><path d="M5 0v10M0 5h10" /></svg>
      </div>
    </div>
  );
}

function StatusBar() {
  return (
    <footer className="flex h-[24px] items-center border-t border-[#d8d6d4] bg-[#f3f2f1] pl-1 pt-px text-[11.500px] text-[#484644]">
      <span className="mt-0.5">Page 4 of 4</span>
      <svg width="123" height="12" viewBox="0 0 123 12" className="ml-auto" fill="none" stroke="#484644">
        <path d="M0 6.500h4M115 5.500h8M119 1.500v8" strokeWidth="1.300" />
        <path d="M9 5.500h100M59.500 3v5" />
        <path d="M37 0v11" strokeWidth="4" />
      </svg>
      <span className="ml-[13px] w-[25px] tracking-[-0.2px]">60%</span>
      <svg width="16" height="12" viewBox="0 0 16 12" className="ml-[17px] mr-[18px]" fill="none" stroke="#605e5c">
        <rect x=".5" y=".5" width="15" height="11" />
        <path d="M3 5V3h2M11 3h2v2M13 7v2h-2M5 9H3V7" stroke="#8c3fa8" />
      </svg>
    </footer>
  );
}

function Slot({ children, dot, active }: Kids & { dot?: boolean; active?: boolean }) {
  return (
    <div className="flex h-full w-11 flex-col items-center">
      <div className={`relative mt-[5px] flex h-[38px] w-[38px] items-center justify-center rounded ${active ? "border border-[#e9e9e9] bg-[#ececec]" : ""}`}>
        <svg width="26" height="26" viewBox="0 0 26 26" fill="none" className="overflow-visible">{children}</svg>
        {dot && <i className="absolute bottom-0 h-[3px] w-[6px] rounded-full bg-[#7c7c7c]" />}
        {active && <i className="absolute bottom-0 h-[3px] w-4 rounded-full bg-[#0067c0]" />}
      </div>
    </div>
  );
}

function Taskbar() {
  return (
    <div className="flex h-[48px] bg-[#dadada] text-[11.200px] text-[#1b1b1b]">
      <div className="flex w-[384px] items-start pl-[18px]">
        <svg width="28" height="34" viewBox="0 0 28 34" fill="none" className="mt-[4px]">
          <defs><linearGradient id="sun" x1="0" y1="0" x2="0" y2="1"><stop offset="0" stopColor="#fbcf2f" /><stop offset="1" stopColor="#e8650a" /></linearGradient></defs>
          <circle cx="12.500" cy="19" r="10.500" fill="url(#sun)" />
          <path d="M6 13.500h6M3 17.500h11M16 17.500h5M1 21.500h8M12 21.500h9M1 24.500h14" stroke="#e7d29a" strokeWidth="1.500" />
          <circle cx="20" cy="10" r="8" fill="#c42b1c" />
          <text x="17" y="14" fontSize="11" fontFamily="Open Sans, sans-serif" fill="#fff">4</text>
        </svg>
        <div className="ml-[4px] mt-[8px] leading-4"><div>26°C</div><div className="text-[11.500px] text-[#5d5d5d]">Haze</div></div>
      </div>
      <svg width="23" height="23" viewBox="0 0 23 23" className="mt-[13px]">
        <defs><linearGradient id="win" x1="0" y1="0" x2="1" y2="1"><stop offset="0" stopColor="#4cc7f7" /><stop offset="1" stopColor="#0067c9" /></linearGradient></defs>
        <path d="M0 0h11v11H0zM12 0h11v11H12zM0 12h11v11H0zM12 12h11v11H12z" fill="url(#win)" />
      </svg>
      <div className="ml-[14px] mt-[8px] flex h-[32px] w-[218px] items-center rounded-full border border-[#c9c9c9] bg-[#f3f3f3] pl-[9px] text-[13.400px] text-[#5d5d5d]">
        <SearchIcon size={17} strokeWidth={2} color="#222" />
        <span className="ml-[9px] mt-px tracking-[-0.1px]">Search</span>
        <svg width="40" height="26" viewBox="0 0 40 26" className="ml-auto mr-[7px]" fill="none">
          <path d="M3 3q-1 5 2 6l5 14M1 3q0 6 4 6 3-1 2-6" stroke="#d9a066" strokeWidth="1.800" />
          <ellipse cx="36" cy="5" rx="3.500" ry="4" fill="#d9a066" /><path d="m35 8-5 15" stroke="#d9a066" strokeWidth="2" />
          <path d="m10 6 6-4 9 1 5 5-1 10-8 6-9-3-4-8z" fill="#7db544" />
          <path d="m12 9 6-5 2 8-8 8zM22 6l6 6-5 8-4-4z" fill="#b4d86b" />
          <circle cx="15" cy="15" r="4" fill="#d8402c" /><circle cx="25" cy="9" r="3" fill="#e5543c" /><circle cx="21" cy="19" r="3" fill="#f7e9c8" /><circle cx="26" cy="17" r="3" fill="#c93a2a" />
        </svg>
      </div>
      <div className="ml-[3px] flex">
        <Slot><path d="M1 7.500h18v18H1z" fill="#2b2b2b" /><path d="M7 0h18v18H7z" fill="#f9f9f9" /><path d="M7 7.500h12V18H7z" fill="#bdbdbd" /></Slot>
        <Slot><g transform="translate(0 0) scale(.82)"><CopilotMark /></g></Slot>
        <Slot><path d="M1 1h8l3 3h12q1 0 1 1v17H1z" fill="#e2a014" /><path d="M1 6h24v17q0 2-2 2H3q-2 0-2-2z" fill="#ffcf48" /><path d="M6 25v-5q0-2 2-2h10q2 0 2 2v5z" fill="#1372c4" /></Slot>
        <Slot dot>
          <defs>
            <linearGradient id="edgeT" x1="0" y1="0" x2="1" y2=".6"><stop offset="0" stopColor="#168ad8" /><stop offset=".6" stopColor="#35c1d6" /><stop offset="1" stopColor="#67dc4c" /></linearGradient>
            <linearGradient id="edgeB" x1="0" y1="0" x2="0" y2="1"><stop offset="0" stopColor="#1579c9" /><stop offset="1" stopColor="#0c4f9e" /></linearGradient>
          </defs>
          <path d="M1 12Q3 1 13 1q12 1 12 11 0 6-7 6-4 0-4-2 2-1 1-4-2-4-7-4-5 0-7 4z" fill="url(#edgeT)" />
          <path d="M1 12q3-4 8-4 4 0 6 3-5 1-5 6 1 6 8 6 3 0 5-1-4 4-10 3.500Q2 24 1 12z" fill="url(#edgeB)" />
        </Slot>
        <Slot active><path d="M1-1h24v27H1z" fill="#0a74da" /><path d="M12-1h10v27H12z" fill="#c98a0c" /><path d="M8 6h8v20H8z" fill="#eebc36" /><path d="M2 13h8v13H2z" fill="#f9da6c" /></Slot>
        <Slot>
          <path d="m1.500 24.500 2-6.500Q0 11 5 5.500 10 1 17 3q8 4 7 12-2 9-11 9-3 0-5-1z" stroke="#1c8a50" strokeWidth="2.500" fill="#e4efe8" />
          <path d="M8 8q2-2 3 0l1 2-1 2q1 3 4 4l2-1.500 3 1.500q0 4-4 3.500Q9 18 8 12z" fill="#1c8a50" />
          <rect x="13" y="-5" width="19" height="17" rx="8.500" fill="#0a74da" />
          <text x="16" y="7.500" fontSize="10.500" fontFamily="Open Sans, sans-serif" fill="#fff">58</text>
        </Slot>
        <Slot><path d="m6 6 9-5 10 6v14q0 4-4 4H9q-3 0-3-4z" fill="#1b9de2" /><path d="m10 20 15-10v11q0 4-4 4H10z" fill="#4bd0f5" /><path d="m6 8 9-5 9 5-9 5z" fill="#1565b8" /><rect x="1" y="7" width="13" height="13" rx="2" fill="#0b63bf" /><circle cx="7.500" cy="13.500" r="3" stroke="#fff" strokeWidth="1.700" /></Slot>
        <Slot dot>
          <path d="m10.500 1h5l1 4 3 1.500 3.500-1.500 2.500 4.500-3 3v2l3 3-2.500 4.500-3.500-1.500-3 1.500-1 4h-5l-1-4-3-1.500L3 22 .5 17.500l3-3v-2l-3-3L3 5l3.500 1.500 3-1.500z" fill="#6f767d" />
          <circle cx="13" cy="13.500" r="6" fill="#e8eef4" /><circle cx="13" cy="13.500" r="4.500" fill="#1469b5" />
        </Slot>
      </div>
      <div className="ml-auto mr-[19px] flex items-start">
        <ChevronUp size={16} strokeWidth={2} className="mt-[16px]" />
        <svg width="17" height="12" viewBox="0 0 18 13" className="ml-[16px] mt-[18px]" fill="none" stroke="#222" strokeWidth="1.300">
          <path d="M4.500 11.500q-3.500 0-3.800-3 .3-3 3.800-3Q6 1 10 1.500q4 .5 4.500 4 3 .5 2.700 3.500-.5 2.500-3 2.500z" fill="#bbb" /><path d="m5 5.500 6 3 5-2" strokeWidth=".8" />
        </svg>
        <svg width="14" height="12" viewBox="0 0 14 12" className="ml-[16px] mt-[18px]" fill="none" stroke="#222" strokeWidth="1.100">
          <path d="M.8 4.500q6-6 12.400 0M3 7q4-4 8 0M5 9.200q2-2 4 0" /><circle cx="7" cy="10.700" r="1" fill="#222" stroke="none" />
        </svg>
        <svg width="15" height="13" viewBox="0 0 16 14" className="ml-[9px] mt-[17px]" fill="none" stroke="#222" strokeWidth="1.100">
          <path d="M.6 5v4h2.800L7 12.500v-11L3.400 5zM9 5q1.500 2 0 4M11 3q3 4 0 8" /><path d="M13 1q4.500 6 0 12" stroke="#999" />
        </svg>
        <svg width="16" height="13" viewBox="0 0 19 14" className="ml-[10px] mt-[17px]" fill="none" stroke="#222" strokeWidth="1.200">
          <path d="M6 3h9.500q1 0 1 1v7q0 1-1 1H5q-1 0-1-1V9M18 6v3" /><path d="M6 8h4v3H6z" fill="#222" /><path d="M2.500 0v2.500M5.500 0v2.500M1 2.500h6v2q0 2-3 2t-3-2zM4 6.500v3" fill="#222" />
        </svg>
        <div className="ml-[15px] mt-[8px] w-[63px] whitespace-nowrap text-right leading-4">
          <div>11:31</div><div className="text-[11.600px]">27-07-2025</div>
        </div>
      </div>
    </div>
  );
}

export default function App() {
  return (
    <div className="flex h-[768px] w-[1366px] flex-col overflow-hidden bg-[#f3f2f1] font-['Open_Sans','Noto_Sans',sans-serif]">
      <TitleBar />
      <Ribbon />
      <main className="flex h-[535px]">
        <Rail />
        <div className="flex w-[963px] shrink-0 flex-col">
          <div className="flex h-[500px]">
            <Canvas />
            <Filters />
          </div>
          <PageTabs />
        </div>
        <Visualizations />
        <DataPane />
      </main>
      <StatusBar />
      <div className="h-px bg-black" />
      <Taskbar />
    </div>
  );
}
